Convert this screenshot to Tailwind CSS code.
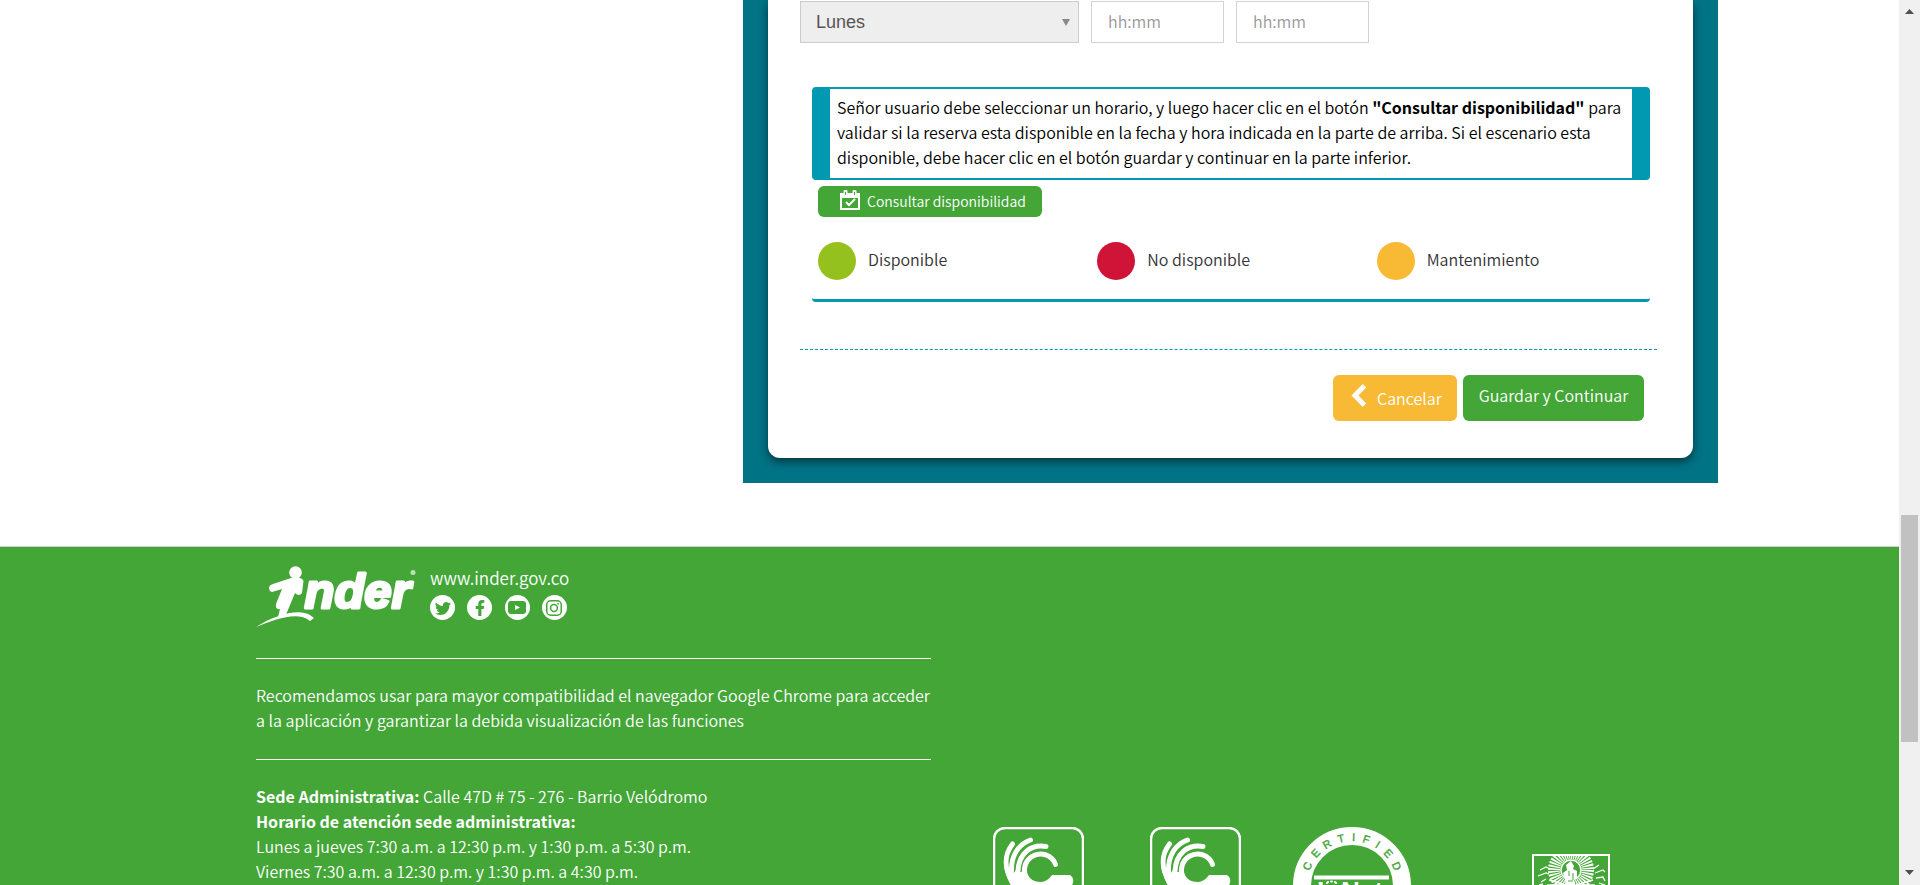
<!DOCTYPE html>
<html lang="es">
<head>
<meta charset="utf-8">
<meta name="viewport" content="width=device-width, initial-scale=1">
<title>INDER - Reserva de escenarios</title>
<script src="https://cdn.jsdelivr.net/npm/@tailwindcss/browser@4"></script>
</head>
<body class="bg-white font-['Noto_Sans_CJK_SC','Noto_Sans',sans-serif] text-[16px] leading-[25px] font-[350] text-black">
<div class="flex h-screen overflow-hidden">
  <div class="min-w-0 flex-1">
    <main class="grid grid-cols-[743fr_975fr_181fr]">
      <section class="col-start-2 bg-[#007385] px-[25px] pb-[25px]">
        <form class="rounded-b-xl bg-white pt-px pr-9 pb-[37px] pl-8 shadow-[0_4px_8px_rgba(0,0,0,0.5)]">
          <div class="flex gap-3">
            <div class="relative w-[279px]">
              <select aria-label="Día" class="h-[42px] w-full appearance-none border border-[#ccc] bg-[#eee] px-[15px] font-['Liberation_Sans',sans-serif] text-[18px] text-[#555]"><option>Lunes</option></select>
              <svg class="pointer-events-none absolute top-[18px] right-[9px] h-[7px] w-2" viewBox="0 0 8 7" fill="#888"><path d="M0 0h8L4 7z"/></svg>
            </div>
            <input type="text" aria-label="Hora inicial" placeholder="hh:mm" class="h-[42px] w-[133px] border border-[#d2d2dc] px-4 pb-[2px] text-[16px] placeholder:text-[#999]">
            <input type="text" aria-label="Hora final" placeholder="hh:mm" class="h-[42px] w-[133px] border border-[#d2d2dc] px-4 pb-[2px] text-[16px] placeholder:text-[#999]">
          </div>
          <div class="mt-11 mr-[7px] ml-3 rounded-b-[4px] border-b-3 border-[#0099b2] pb-[19px]">
            <p class="rounded-[4px] border-x-18 border-y-2 border-[#0099b2] px-[7px] pt-[6px] pb-[8px]">Señor usuario debe seleccionar un horario, y luego hacer clic en el botón <b class="font-bold">"Consultar disponibilidad"</b> para validar si la reserva esta disponible en la fecha y hora indicada en la parte de arriba. Si el escenario esta disponible, debe hacer clic en el botón guardar y continuar en la parte inferior.</p>
            <button type="button" class="mt-[6px] ml-[6px] flex h-[31px] items-center gap-[7px] rounded-[6px] bg-[#43a637] pr-4 pl-[22px] text-[14px] text-white">
              <svg class="mb-[3px] h-5 w-5" viewBox="0 0 20 20" fill="none" stroke="currentColor"><path d="M1 4v15h18V4" stroke-width="2"/><path d="M0 3h20v5H0z" fill="currentColor" stroke="none"/><path d="M5.500 1.500v4M14.500 1.500v4" stroke-width="4" stroke-linecap="round"/><path d="M5.500 2v3M14.500 2v3" stroke="#43a637" stroke-width="1"/><path d="M6 12l3 3 6-6" stroke-width="2"/></svg>
              <span class="pb-px">Consultar disponibilidad</span>
            </button>
            <ul class="mt-[25px] grid grid-cols-3 text-[#333]">
              <li class="flex items-center gap-3 pl-[6px]"><span class="size-[38px] rounded-full bg-[#95c11f]"></span><span class="pb-[3px]">Disponible</span></li>
              <li class="flex items-center gap-3 pl-[6px]"><span class="size-[38px] rounded-full bg-[#cf1437]"></span><span class="pb-[3px]">No disponible</span></li>
              <li class="flex items-center gap-3 pl-[6px]"><span class="size-[38px] rounded-full bg-[#f8b935]"></span><span class="pb-[3px]">Mantenimiento</span></li>
            </ul>
          </div>
          <hr class="mt-[47px] border-t border-dashed border-[#0099b2]">
          <div class="mt-[25px] mr-[13px] flex justify-end gap-[6px] text-[16px] text-white">
            <button type="button" class="flex h-[46px] w-[124px] items-center gap-[11px] rounded-[6px] bg-[#f8b935] pl-[18px]">
              <svg class="mb-[6px] h-[23px] w-[15px]" viewBox="0 0 15 23" fill="none" stroke="currentColor" stroke-width="5"><path d="M13.500 1.800L4 11.500l9.500 9.700"/></svg>
              <span class="pt-px">Cancelar</span>
            </button>
            <button type="submit" class="h-[46px] w-[181px] rounded-[6px] bg-[#43a637] pb-[6px]">Guardar y Continuar</button>
          </div>
        </form>
      </section>
    </main>
    <footer class="mt-[63px] grid grid-cols-[256fr_675fr_968fr] border-t border-[#cfd3d6] bg-[#43a637] text-white">
      <div class="col-start-2 pt-[18px]">
        <div class="flex gap-[14px]">
          <svg class="h-16 w-40 overflow-visible" viewBox="0 0 160 64" fill="#fff" role="img" aria-label="inder">
            <circle cx="39.500" cy="7.500" r="6.300"/>
            <path d="M13 23Q13 20 17 19L35 13Q46 11 47.500 16L46 28Q43 32 39 28L29 52H22L24 44Q19 45 20 39L26 24L16 27Q13 26 13 23Z"/>
            <path d="M0 62C18 50 43 43 54 50L58 53L54 56C42 46 20 54 0 62Z"/>
            <text x="48.500" y="43" font-family="Liberation Sans" font-size="49" font-weight="700" font-style="italic" stroke="#fff" stroke-width="3" stroke-linejoin="round">nder</text>
            <circle cx="157" cy="7.500" r="2.500" opacity=".65"/>
          </svg>
          <div>
            <a href="#" class="block text-[17px]">www.inder.gov.co</a>
            <div class="mt-[5px] flex w-[137px] justify-between">
              <a href="#" aria-label="Twitter" class="grid size-[25px] place-items-center rounded-full bg-white text-[#43a637]"><svg class="size-4" viewBox="0 0 16 16" fill="currentColor"><path d="M5.026 15c6.038 0 9.341-5.003 9.341-9.334q.002-.211-.006-.422A6.700 6.700 0 0 0 16 3.542a6.700 6.700 0 0 1-1.889.518 3.300 3.300 0 0 0 1.447-1.817 6.500 6.500 0 0 1-2.087.793A3.286 3.286 0 0 0 7.875 6.030a9.320 9.320 0 0 1-6.767-3.429 3.290 3.290 0 0 0 1.018 4.382A3.300 3.300 0 0 1 .64 6.575v.045a3.290 3.290 0 0 0 2.632 3.218 3.200 3.200 0 0 1-.865.115 3 3 0 0 1-.614-.057 3.280 3.280 0 0 0 3.067 2.277A6.600 6.600 0 0 1 .78 13.580a6 6 0 0 1-.78-.045A9.340 9.340 0 0 0 5.026 15"/></svg></a>
              <a href="#" aria-label="Facebook" class="grid size-[25px] place-items-center rounded-full bg-white text-[#43a637]"><svg class="h-4 w-[10px]" viewBox="0 0 320 512" fill="currentColor"><path d="M279.140 288l14.220-92.660h-88.910v-60.130c0-25.350 12.420-50.060 52.240-50.060h40.420V6.260S260.430 0 225.360 0c-73.220 0-121.080 44.380-121.080 124.720v70.620H22.890V288h81.390v224h100.170V288z"/></svg></a>
              <a href="#" aria-label="YouTube" class="grid size-[25px] place-items-center rounded-full bg-white text-[#43a637]"><svg class="h-[13px] w-[18px]" viewBox="0 0 18 13"><rect width="18" height="13" rx="3" fill="currentColor"/><path d="M7 4v5l5-2.500z" fill="#fff"/></svg></a>
              <a href="#" aria-label="Instagram" class="grid size-[25px] place-items-center rounded-full bg-white text-[#43a637]"><svg class="size-4" viewBox="0 0 16 16" fill="none" stroke="currentColor" stroke-width="1.500"><rect x=".75" y=".75" width="14.500" height="14.500" rx="4"/><circle cx="8" cy="8" r="3.400"/><circle cx="12.200" cy="3.800" r=".9" fill="currentColor" stroke="none"/></svg></a>
            </div>
          </div>
        </div>
        <hr class="mt-[29px] border-t border-white">
        <p class="mt-6 mb-[26px]">Recomendamos usar para mayor compatibilidad el navegador Google Chrome para acceder a la aplicación y garantizar la debida visualización de las funciones</p>
        <hr class="border-t border-white">
        <p class="mt-6"><b>Sede Administrativa:</b> Calle 47D # 75 - 276 - Barrio Velódromo<br><b>Horario de atención sede administrativa:</b><br>Lunes a jueves 7:30 a.m. a 12:30 p.m. y 1:30 p.m. a 5:30 p.m.<br>Viernes 7:30 a.m. a 12:30 p.m. y 1:30 p.m. a 4:30 p.m.</p>
      </div>
      <div class="flex items-start pt-[280px] pl-[62px]">
        <svg class="h-[118px] w-[91px] shrink-0" viewBox="0 0 91 118" fill="none" stroke="#fff" role="img" aria-label="Icontec ISO 9001">
          <g id="seal"><rect x="1" y="1" width="89" height="100" rx="11" stroke-width="2.500"/>
          <g stroke-width="5" stroke-linecap="round"><path d="M62.500 37.500A16 16 0 1 0 60 53"/><path d="M53 19.500C37 17 26 27 25 44"/><path d="M37.500 13C26 17 18 28 18.500 44"/><path d="M19.500 17C11 28 11 42 20 56"/></g>
          <path d="M11 38Q14 47 17 43Q20 48 23 43Q26 48 33 42Q35 55 48 55Q54 55 59 48H77Q83 52 78 60Q70 76 48 76Q18 76 11 38Z" fill="#fff" stroke="none"/></g>
        </svg>
        <svg class="ml-[66px] h-[118px] w-[91px] shrink-0" viewBox="0 0 91 118" fill="none" stroke="#fff" role="img" aria-label="Icontec ISO 14001"><use href="#seal"/></svg>
        <svg class="ml-[52px] size-[118px] shrink-0" viewBox="0 0 118 118" role="img" aria-label="IQNet Certified">
          <circle cx="59" cy="59" r="50" fill="none" stroke="#fff" stroke-width="18"/>
          <g font-family="Liberation Sans" font-size="11" fill="#43a637" stroke="#43a637" stroke-width=".4" text-anchor="middle">
            <text transform="rotate(-66 59 59)" x="59" y="14">C</text><text transform="rotate(-48 59 59)" x="59" y="14">E</text><text transform="rotate(-31 59 59)" x="59" y="14">R</text><text transform="rotate(-13 59 59)" x="59" y="14">T</text><text transform="rotate(2 59 59)" x="59" y="14">I</text><text transform="rotate(17 59 59)" x="59" y="14">F</text><text transform="rotate(32 59 59)" x="59" y="14">I</text><text transform="rotate(48 59 59)" x="59" y="14">E</text><text transform="rotate(66 59 59)" x="59" y="14">D</text>
          </g>
          <path d="M21 48.500h75v4H21z" fill="#fff"/>
          <text x="24" y="73" font-family="Liberation Sans" font-size="26" font-weight="700" fill="#fff">I</text>
          <text x="48" y="73" font-family="Liberation Sans" font-size="26" font-weight="700" fill="#fff">Net</text>
          <path d="M34 56l1-1M38 54.500h1M42 55l1 1M36 59h5" stroke="#fff" stroke-width="2" stroke-linecap="round"/>
        </svg>
        <svg class="mt-[27px] ml-[121px] h-[110px] w-[78px] shrink-0" viewBox="0 0 78 110" fill="none" stroke="#fff" role="img" aria-label="Alcaldía de Medellín">
          <path d="M1 110V1h76v109" stroke-width="2"/>
          <circle cx="39" cy="16" r="17" stroke-width="12" stroke-dasharray="1.600 1.060" clip-path="inset(2px 0 0 0)"/>
          <circle cx="39" cy="16" r="10" stroke-width="1.500"/>
          <path d="M34 31l-17-5M33 31l-18 0M34 33H14M44 31l17-5M45 31h18M44 33h20" stroke-width="1.500"/>
          <path d="M39 7l3 5-1 3 4 2v7l-3 1 1 9h-9l-1-9-2-6 4-3-1-5z" fill="#fff" stroke="none"/>
          <path d="M37 17v5M41 19v7M36 27h5" stroke="#43a637"/>
          <path d="M8 16l6-3 4 2M6 22l8-3 3 1M9 28l5-3M7 31l4-1M61 15l6-4M63 19l8-3 2 2M64 24l7-1 2 4M67 29l6 2" stroke-width="1.300"/>
        </svg>
      </div>
    </footer>
  </div>
  <div class="flex w-[21px] shrink-0 flex-col items-center justify-between bg-[#f0f0f0] pt-[9px] pb-[10px]" aria-hidden="true">
    <svg class="h-[5px] w-[9px]" viewBox="0 0 9 5" fill="#505050"><path d="M0 5h9L4.500 0z"/></svg>
    <div class="mt-[501px] mb-auto h-[227px] w-[17px] bg-[#c1c1c1]"></div>
    <svg class="h-[5px] w-[9px]" viewBox="0 0 9 5" fill="#505050"><path d="M0 0h9L4.500 5z"/></svg>
  </div>
</div>
</body>
</html>
